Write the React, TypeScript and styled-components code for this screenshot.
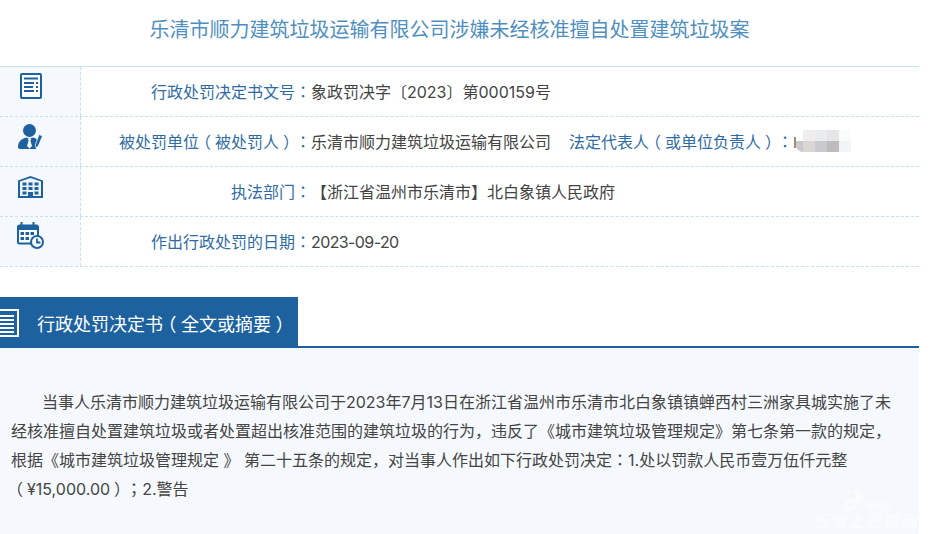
import React from "react";
import styled, { createGlobalStyle } from "styled-components";

const GlobalStyle = createGlobalStyle`
  html, body {
    margin: 0;
    padding: 0;
    background: #fff;
    overflow: hidden;
  }
  body {
    font-family: Inter, "Noto Sans CJK SC", "Noto Sans", sans-serif;
    color: #444;
    text-spacing-trim: space-all;
  }
`;

const DocIcon = () => (
  <svg width="22" height="26" viewBox="0 0 22 26">
    <rect x="1" y="1" width="20" height="24" rx="1" fill="#fff" stroke="#1d629f" strokeWidth="2" />
    <path d="M4 5.500h14M4 10h10M4 14h9M4 18h10" stroke="#1d629f" strokeWidth="2" />
    <path d="M16 10h2M16 14h2M16 18h2" stroke="#1d629f" strokeWidth="2" />
  </svg>
);

const PersonIcon = () => (
  <svg width="25" height="25" viewBox="0 0 25 25">
    <circle cx="11.500" cy="6.500" r="6.500" fill="#1d629f" />
    <path d="M0 23c0-5 3-8 8-9.500l3.500 1.500 3.500-1.500c2.500.6 4 1.800 5 3.500l-2 8H2c-1 0-2-.8-2-2z" fill="#1d629f" />
    <path d="M10 15h3l-.6 2 1.600 5-2.500 2.500L9 22l1.600-5z" fill="#fff" />
    <path d="M21 10.500l3.500 1.500-4.200 10-2.300 2-.7-3z" fill="#1d629f" stroke="#fff" strokeWidth=".7" />
  </svg>
);

const BuildingIcon = () => (
  <svg width="25" height="22" viewBox="0 0 25 22">
    <path d="M0 4.500L12.500 0 25 4.500V22H0z" fill="#1d629f" />
    <path d="M2 5.500L12.500 2 23 5.500V20H2z" fill="#eef4fb" />
    <path
      d="M4.500 6.500h4v3h-4zM10.500 6.500h4v3h-4zM16.500 6.500h4v3h-4zM4.500 11h4v3h-4zM10.500 11h4v3h-4zM16.500 11h4v3h-4zM4.500 15.500h4v3h-4zM16.500 15.500h4v3h-4zM10 16h5v6h-5z"
      fill="#1d629f"
    />
  </svg>
);

const CalendarIcon = () => (
  <svg width="27" height="27" viewBox="0 0 27 27">
    <rect x="1" y="3.500" width="20" height="18" rx="1.500" fill="#fff" stroke="#1d629f" strokeWidth="2" />
    <path d="M1 4h20v4H1z" fill="#1d629f" />
    <path d="M4.500 0v6M16.500 0v6" stroke="#1d629f" strokeWidth="2" />
    <path
      d="M3.500 10h3.500v3H3.500zM8.500 10H12v3H8.500zM13.500 10H17v3h-3.500zM3.500 15H7v3H3.500zM8.500 15H12v3H8.500z"
      fill="#1d629f"
    />
    <circle cx="20" cy="20" r="6" fill="#fff" stroke="#1d629f" strokeWidth="2" />
    <path d="M20 16.500V20.500h3.500" fill="none" stroke="#1d629f" strokeWidth="1.800" />
  </svg>
);

const NoteIcon = () => (
  <svg width="19" height="30" viewBox="0 0 19 30">
    <path d="M0 2h18v26H0" fill="none" stroke="#fff" strokeWidth="2" />
    <path d="M0 8h14M0 12h14M0 16h14M0 20h14M0 24h14" stroke="#fff" strokeWidth="2" />
  </svg>
);

const SiteLogo = () => (
  <svg width="23" height="26" viewBox="0 0 23 26">
    <path
      d="M1 23c0-6 5-9 9-9 3 0 4-1 4-3s-2-2-4-3c2-3 7-3 10 0 3 4 0 7-3 9-2 4-5 7-9 8-4 1-7 1-7-2zm4-1c0 2 3 1 5-1 2-1 2-3 1-3-3 0-6 2-6 4z"
      fill="#fff"
    />
    <path d="M0 5l5 5M5 0l2 9M0 11l6 1" stroke="#fff" strokeOpacity=".7" strokeWidth="1" />
  </svg>
);

const Page = styled.div`
  position: relative;
  width: 919px;
  height: 534px;
  overflow: hidden;
`;

const Title = styled.h1`
  margin: 0;
  padding-right: 20px;
  height: 66px;
  font-size: 20px;
  font-weight: 400;
  line-height: 60px;
  color: #4f8fc0;
  text-align: center;
`;

const InfoTable = styled.div`
  border-top: 1px solid #c5e0f0;
`;

const InfoRow = styled.div`
  display: grid;
  grid-template-columns: 81px 230px 1fr;
  grid-template-rows: 49px;
  border-bottom: 1px dashed #c5e0f0;
`;

const IconCell = styled.div<{ $top: number }>`
  display: flex;
  justify-content: center;
  padding: ${(p) => p.$top}px 19px 0 0;
  background: #f5f9fe;
  border-right: 1px dashed #c5e0f0;
`;

const Label = styled.div`
  font-size: 16px;
  line-height: 51px;
  color: #2f6ca3;
  text-align: right;
  white-space: nowrap;
`;

const Value = styled.div<{ $tight?: boolean }>`
  display: flex;
  font-size: 16px;
  line-height: 51px;
  letter-spacing: ${(p) => (p.$tight ? "-0.6px" : "0")};
  color: #444;
  white-space: nowrap;
`;

const Legal = styled.span`
  margin-left: 18px;
  color: #2f6ca3;
`;

const Sliver = styled.i`
  align-self: center;
  width: 2px;
  height: 11px;
  margin: 2px 0 0 1px;
  background: #a08a78;
`;

const Masked = styled.span`
  display: inline-grid;
  grid-template-columns: 7px repeat(4, 12px);
  grid-auto-rows: 11px;
  align-self: center;
  margin-top: -2px;
  border-radius: 7px 0 0 7px;
  overflow: hidden;
`;

const MaskCell = styled.i<{ $shade: string }>`
  background: ${(p) => p.$shade};
`;

const SectionHead = styled.div`
  display: flex;
  margin-top: 30px;
  height: 49px;
  border-bottom: 2px solid #1d629f;
`;

const SectionTab = styled.div`
  display: flex;
  align-items: center;
  gap: 18px;
  width: 298px;
  height: 51px;
  background: #1d629f;
  color: #fff;
  font-size: 18px;
  white-space: nowrap;
`;

const Body = styled.div`
  height: 186px;
  padding: 40px 24px 0 11px;
  box-sizing: border-box;
  background: #f5f9fe;
  font-size: 16px;
  line-height: 29px;
  color: #444;
  text-indent: 31px;
`;

const Punct = styled.span<{ $shift: number }>`
  font-family: "Noto Sans CJK TC", sans-serif;
  line-height: 0;
  margin-left: ${(p) => p.$shift}em;
  margin-right: ${(p) => -p.$shift}em;
`;

const Watermark = styled.div`
  position: absolute;
  right: 0;
  bottom: 3px;
  width: 107px;
  font-size: 16px;
  line-height: 20px;
  font-style: italic;
  font-weight: 700;
  letter-spacing: 1.700px;
  color: #fff;
  opacity: 0.5;
  white-space: nowrap;
`;

const WatermarkLogo = styled.div`
  display: flex;
  align-items: flex-end;
  margin: 0 0 0 30px;
  height: 26px;
  font-size: 12px;
  line-height: 12px;
  letter-spacing: 0;
`;

const parenShift: Record<string, number> = { "（": -0.25, "）": 0.25 };

const centred = (text: string) =>
  text.split(/([（）：；])/).map((part, i) =>
    i % 2 ? (
      <Punct key={i} $shift={parenShift[part] ?? 0}>
        {part}
      </Punct>
    ) : (
      part
    )
  );

const maskShades = [
  "#ffffff", "#efeeec", "#e9ebee", "#e6e6e8", "#fafbfb",
  "#c8cacb", "#d9d6d3", "#c8cacc", "#bdbbbc", "#f3f4f6",
];

const rows = [
  { icon: <DocIcon />, top: 6, label: "行政处罚决定书文号：", value: "象政罚决字〔2023〕第000159号" },
  { icon: <PersonIcon />, top: 7, label: "被处罚单位（被处罚人）：", value: "乐清市顺力建筑垃圾运输有限公司", legal: true },
  { icon: <BuildingIcon />, top: 9, label: "执法部门：", value: "【浙江省温州市乐清市】北白象镇人民政府" },
  { icon: <CalendarIcon />, top: 5, label: "作出行政处罚的日期：", value: "2023-09-20", tight: true },
];

const App = () => {
  return (
    <Page>
      <GlobalStyle />
      <Title>乐清市顺力建筑垃圾运输有限公司涉嫌未经核准擅自处置建筑垃圾案</Title>
      <InfoTable>
        {rows.map((row) => (
          <InfoRow key={row.label}>
            <IconCell $top={row.top}>{row.icon}</IconCell>
            <Label>{centred(row.label)}</Label>
            <Value $tight={row.tight}>
              {row.value}
              {row.legal && (
                <>
                  <Legal>{centred("法定代表人（或单位负责人）：")}</Legal>
                  <Sliver />
                  <Masked>
                    {maskShades.map((shade, i) => (
                      <MaskCell key={i} $shade={shade} />
                    ))}
                  </Masked>
                </>
              )}
            </Value>
          </InfoRow>
        ))}
      </InfoTable>
      <SectionHead>
        <SectionTab>
          <NoteIcon />
          <span>{centred("行政处罚决定书（全文或摘要）")}</span>
        </SectionTab>
      </SectionHead>
      <Body>
        {centred(
          "当事人乐清市顺力建筑垃圾运输有限公司于2023年7月13日在浙江省温州市乐清市北白象镇镇蝉西村三洲家具城实施了未经核准擅自处置建筑垃圾或者处置超出核准范围的建筑垃圾的行为，违反了《城市建筑垃圾管理规定》第七条第一款的规定，根据《城市建筑垃圾管理规定 》 第二十五条的规定，对当事人作出如下行政处罚决定：1.处以罚款人民币壹万伍仟元整（¥15,000.00）；2.警告"
        )}
      </Body>
      <Watermark>
        <WatermarkLogo>
          <SiteLogo />
          Siqu
        </WatermarkLogo>
        乐清上班族网
      </Watermark>
    </Page>
  );
};

export default App;
